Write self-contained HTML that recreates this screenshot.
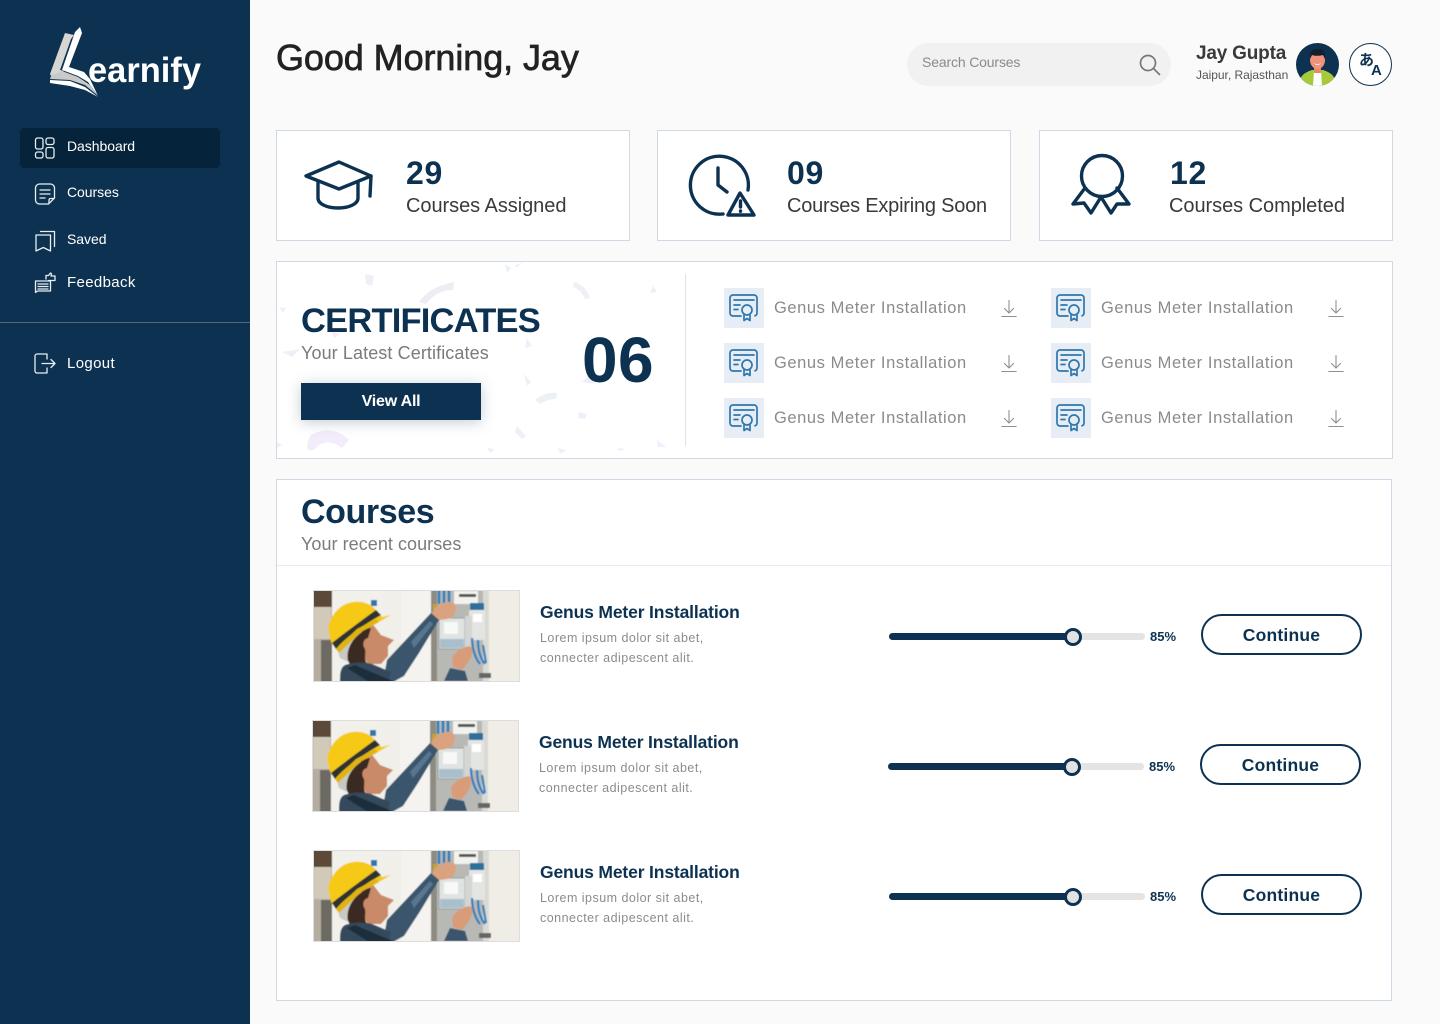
<!DOCTYPE html>
<html lang="en"><head><meta charset="utf-8"><title>Learnify</title>
<style>
*{box-sizing:border-box}
html,body{margin:0;padding:0;width:1440px;height:1024px;overflow:hidden;background:#fafafa;font-family:"Liberation Sans",sans-serif}
.a{position:absolute}
.t{position:absolute;white-space:nowrap;line-height:1}
.card{position:absolute;background:#fff;border:1px solid #cfd9e3}
svg{position:absolute;overflow:visible}
.n{color:#fff;font-size:14px;left:67px;letter-spacing:-.05px}
.ic{fill:none;stroke:#e8edf1;stroke-width:1.3;stroke-linecap:round;stroke-linejoin:round}
.navy{fill:none;stroke:#0d3251;stroke-width:3.4;stroke-linecap:round;stroke-linejoin:round}
.num{font-size:32px;font-weight:700;color:#0d3251;letter-spacing:.7px}
.lab{font-size:20px;color:#3a3a3a;letter-spacing:-.05px}
.gm{font-size:16.5px;color:#8b8b8b;letter-spacing:.58px}
.tile{position:absolute;width:40px;height:40px;background:#e6edf4}
.ct{font-size:17.5px;font-weight:700;color:#0d3251;letter-spacing:-.15px}
.cd{font-size:12.5px;color:#8c8c8c;letter-spacing:.48px}
.pc{font-size:13px;font-weight:700;color:#0d3251;letter-spacing:.05px}
.btn{position:absolute;width:161px;height:41px;border:2px solid #0d3251;border-radius:21px;color:#0d3251;font-size:17.5px;font-weight:700;text-align:center;line-height:38px;letter-spacing:.2px;background:#fff}
.track{position:absolute;width:256px;height:7px;border-radius:4px;background:#e4e4e4}
.fill{position:absolute;width:184px;height:7px;border-radius:4px;background:#0d3251}
.thumb{position:absolute;width:18px;height:18px;border-radius:50%;border:3.5px solid #0d3251;background:#e2e2e2}
</style></head><body>
<svg width="0" height="0" style="position:absolute"><defs>
<filter id="soft" x="0" y="0" width="1" height="1"><feGaussianBlur stdDeviation=".55"/></filter>
<symbol id="cert" viewBox="0 0 40 40">
<g fill="none" stroke="#2f77ad" stroke-width="1.7" stroke-linecap="round" stroke-linejoin="round">
<path d="M17 28H9a3 3 0 0 1-3-3V10a3 3 0 0 1 3-3h21a3 3 0 0 1 3 3v15a3 3 0 0 1-2 2.800"/>
<path d="M10 12h20M10 17h6M10 21.500h4"/>
<circle cx="23" cy="22" r="5"/>
<path d="M20 27v5.500l3-2 3 2V27"/>
</g></symbol>
<symbol id="dl" viewBox="0 0 16 20">
<g fill="none" stroke="#8f8f8f" stroke-width="1.1" stroke-linecap="round" stroke-linejoin="round">
<path d="M8 1.500v12M3.500 9.500 8 14l4.500-4.500M.8 17.500h14.400"/></g></symbol>
<symbol id="photo" viewBox="0 0 207 92" preserveAspectRatio="none">
<g filter="url(#soft)">
<rect width="207" height="92" fill="#f0efe9"/>
<rect x="0" width="19" height="92" fill="#b5ae9f"/>
<rect x="0" y="0" width="19" height="17" fill="#5c4a38"/>
<rect x="1" y="17" width="17" height="32" fill="#d2cab9"/>
<rect x="8" y="50" width="14" height="42" fill="#6d6a63"/>
<rect x="19" width="52" height="92" fill="#f1f0eb"/>
<rect x="88" width="30" height="92" fill="#f4f3ef"/>
<rect x="118" width="8" height="92" fill="#8e8c82"/>
<rect x="124" y="0" width="52" height="92" fill="#b8b9b5"/>
<rect x="176" width="31" height="92" fill="#efede6"/>
<rect x="170" width="6" height="92" fill="#dadad4"/>
<path d="M126 0v14M131 0v14M136 0v16" stroke="#2f7fc0" stroke-width="2.600" fill="none"/>
<rect x="141" y="1" width="24" height="13" fill="#f2f2ee"/><rect x="146" y="4" width="17" height="3" fill="#555"/>
<rect x="120" y="14" width="5" height="8" fill="#c9a227"/>
<rect x="156" y="20" width="16" height="30" fill="#e3e5e2"/><rect x="160" y="24" width="9" height="8" fill="#fff"/>
<path d="M157 13h14v7h-14z" fill="#2f6f9c"/>
<rect x="126" y="28" width="26" height="31" fill="#dfe3e1" stroke="#8d9493" stroke-width=".8"/>
<rect x="131" y="32" width="14" height="12" fill="#f8f8f6"/>
<path d="M127 49h24v9h-24z" fill="#a9c0cc"/>
<path d="M152 26h7v36h-7z" fill="#d4d6d3"/>
<path d="M159 48c0 10 3 20 8 26M165 50c0 10 2 18 7 24M170 55l3 18" stroke="#2f7fc0" stroke-width="2.200" fill="none"/>
<rect x="166" y="83" width="12" height="5" fill="#666"/>
<path d="M119 24c1-7 12-13 19-12 7 1 6 11 1 15-5 3-13 3-18 3Z" fill="#dba27f"/>
<path d="M74 70 118 23 126 30 106 63 91 86 80 92H70Z" fill="#3a566c"/>
<path d="M98 52 117 31 120 34 101 58Z" fill="#587690"/>
<path d="M139 68c3-6 9-10 14-11 5-2 7 0 6 5 0 7-6 13-10 18l-9-3Z" fill="#d99c78"/>
<path d="M131 91l6-13 15 3 3 10Z" fill="#3a566c"/>
<path d="M58 32 68 45 81 50 75 56 75 66 68 74 55 74 46 60Z" fill="#c98a69"/>
<path d="M38 46c10-6 16-8 20-8l-3 10c-5 1-6 7-3 11 1 5-1 9 1 13l3 3-18 1c-6-8-7-21 0-30Z" fill="#3b2b22"/>
<path d="M32 75c8-3 20-3 27-1l19 8-2 10H27c0-8 0-14 5-17Z" fill="#34495d"/>
<path d="M42 75l40 17H56L34 78Z" fill="#1f2e3b"/>
<path d="M32 42c-4 6-9 16-5 26l8 4c-2-10 2-22 14-30Z" fill="#c8c9c4"/>
<path d="M15 38C18 24 28 13 41 12c9-1 17 2 22 8l6 7 9-2-12 7-18 10-22 21-8-11Z" fill="#f5c916"/>
<path d="M19 53c10-8 26-20 44-33l5 5C50 35 32 48 23 59Z" fill="#2f3133"/>
<path d="M26 63 48 42 66 32 63 29 44 39 23 59Z" fill="#e0b40e"/>
<rect x="58" y="10" width="6" height="6" fill="#2f77ad"/>
</g>
</symbol>
</defs></svg>

<!-- Sidebar -->
<div class="a" style="left:0;top:0;width:250px;height:1024px;background:#0d3251"></div>
<svg style="left:0;top:0" width="250" height="110">
<path d="M65 33 74 35 71 39 60 70 64 71 51 76 50 74Z" fill="#d6d6d3"/>
<path d="M51 76 62 71 78 77 90 85 97 95 85 85 70 80 50 79Z" fill="#c9c9c6"/>
<path d="M80 27 82 33 69 67 84 72 90 79 98 96 88 82 78 76 62 70 75 32Z" fill="#fff"/>
<path d="M50 80 70 81 85 87 98 97 85 90 70 86 50 83Z" fill="#fff"/>
<text x="88" y="82" font-family="Liberation Sans" font-size="35" font-weight="700" fill="#fff" textLength="113" lengthAdjust="spacingAndGlyphs">earnify</text>
</svg>
<div class="a" style="left:20px;top:128px;width:200px;height:40px;border-radius:4px;background:#05233a"></div>
<svg style="left:34px;top:137px" width="22" height="22" class="ic" viewBox="0 0 22 22"><rect x="1.500" y="1" width="7.500" height="11" rx="2"/><rect x="12" y="1" width="8" height="6.500" rx="2"/><rect x="1.500" y="15" width="7.500" height="6" rx="2"/><rect x="12" y="10.500" width="8" height="10.500" rx="2"/></svg>
<div class="t n" style="top:139px">Dashboard</div>
<svg style="left:34px;top:183px" width="22" height="22" class="ic" viewBox="0 0 22 22"><path d="M13 21H5.500A4 4 0 0 1 1.500 17V5A4 4 0 0 1 5.500 1h11a4 4 0 0 1 4 4v10l-6 6Z"/><path d="M6 7h10M6 11h10M6 15h5M15 20v-3a1.500 1.500 0 0 1 1.500-1.500H20"/></svg>
<div class="t n" style="top:185px">Courses</div>
<svg style="left:34px;top:229px" width="22" height="24" class="ic" viewBox="0 0 22 24"><path d="M2 6h14.500v16l-7.200-3.500L2 22Z"/><path d="M6.500 2.500H20.500V17.500"/></svg>
<div class="t n" style="top:232px">Saved</div>
<svg style="left:34px;top:272px" width="22" height="22" class="ic" viewBox="0 0 22 22"><path d="M1.500 20.500V9h15v10H3.500Z"/><path d="M4 12h10M4 14.500h10M4 17h10"/><path d="M12 7V3.500h2.500L16.500 1l1 1-.5 2H21v4.500h-6.500" fill="#0d3251"/></svg>
<div class="t n" style="top:275px;font-size:15px;letter-spacing:.35px">Feedback</div>
<div class="a" style="left:0;top:322px;width:250px;height:1px;background:#52697c"></div>
<svg style="left:34px;top:353px" width="22" height="21" class="ic" viewBox="0 0 22 21"><path d="M13 1H3A2 2 0 0 0 1 3v15a2 2 0 0 0 2 2h10v-5M13 6V1"/><path d="M8 10.500h13M17 6.500l4 4-4 4"/></svg>
<div class="t n" style="top:356px;font-size:15px;letter-spacing:.35px">Logout</div>

<!-- Header -->
<div class="t" style="left:276px;top:38px;font-size:36px;line-height:40px;color:#222;font-weight:400;-webkit-text-stroke:.7px #222;letter-spacing:-.08px">Good Morning, Jay</div>
<div class="a" style="left:907px;top:43px;width:264px;height:43px;border-radius:22px;background:#f1f1f2"></div>
<div class="t" style="left:922px;top:55px;font-size:14px;color:#8a8a8a;letter-spacing:-.15px">Search Courses</div>
<svg style="left:1139px;top:54px" width="22" height="22" viewBox="0 0 22 22" fill="none" stroke="#777" stroke-width="1.700" stroke-linecap="round"><circle cx="9" cy="9" r="7.500"/><path d="M14.500 14.500 20.500 20.500"/></svg>
<div class="t" style="left:1196px;top:44px;font-size:19px;font-weight:700;color:#3a3a3a;letter-spacing:-.2px">Jay Gupta</div>
<div class="t" style="left:1196px;top:69px;font-size:12px;color:#555;letter-spacing:-.03px">Jaipur, Rajasthan</div>
<svg style="left:1296px;top:43px" width="43" height="43" viewBox="0 0 43 43">
<defs><clipPath id="av"><circle cx="21.500" cy="21.500" r="21.500"/></clipPath></defs>
<g clip-path="url(#av)"><rect width="43" height="43" fill="#0d3251"/>
<path d="M3 43c0-9 4-13 13-16h11c9 3 13 7 13 16Z" fill="#a8c93a"/>
<path d="M18 28h7l1 15h-9Z" fill="#fff"/>
<rect x="18" y="22" width="7" height="8" fill="#e8876a"/>
<ellipse cx="21.500" cy="17" rx="7.500" ry="9" fill="#f0917a"/>
<path d="M14 16c-1-7 2-10 7-10 6-1 9 3 8 10l-2-4c-4 1-8 1-11 0Z" fill="#10202e"/>
<path d="M18 20c2 1.500 5 1.500 7 0-1 2.500-6 2.500-7 0Z" fill="#fff"/>
</g></svg>
<div class="a" style="left:1349px;top:43px;width:43px;height:43px;border-radius:50%;border:1px solid #0d3251;background:#fff"></div>
<div class="t" style="left:1359px;top:52px;font-size:15px;font-weight:700;color:#0d3251;font-family:'Noto Sans CJK JP',sans-serif">あ</div>
<div class="t" style="left:1371px;top:63px;font-size:15px;font-weight:700;color:#0d3251">A</div>

<!-- Stat cards -->
<div class="card" style="left:276px;top:130px;width:354px;height:111px"></div>
<svg style="left:304px;top:160px" width="70" height="52" viewBox="0 0 70 52" class="navy"><path d="M35 2 2 16 35 29 67 16Z"/><path d="M67 16 66 36"/><path d="M14 23V38c0 6 9 10 20 10s20-4 20-10V23"/></svg>
<div class="t num" style="left:406px;top:157px">29</div>
<div class="t lab" style="left:406px;top:196px">Courses Assigned</div>

<div class="card" style="left:657px;top:130px;width:354px;height:111px"></div>
<svg style="left:688px;top:154px" width="70" height="64" viewBox="0 0 70 64" class="navy"><path d="M35 60A29 29 0 1 1 60 36"/><path d="M30 14V31L39 38"/><path d="M52 39 40 61H66Z"/><path d="M52.500 47v6M52.500 57v.3"/></svg>
<div class="t num" style="left:787px;top:157px">09</div>
<div class="t lab" style="left:787px;top:196px;letter-spacing:-.22px">Courses Expiring Soon</div>

<div class="card" style="left:1039px;top:130px;width:354px;height:111px"></div>
<svg style="left:1071px;top:154px" width="62" height="62" viewBox="0 0 62 62" class="navy"><circle cx="31" cy="22" r="20.500"/><path d="M14 34 2 50 13 49 20 59 30 43 40 59 46 50 58 50 46 34"/></svg>
<div class="t num" style="left:1170px;top:157px">12</div>
<div class="t lab" style="left:1169px;top:196px">Courses Completed</div>

<!-- Certificates -->
<div class="card" style="left:276px;top:261px;width:1117px;height:198px"></div>
<svg style="left:277px;top:262px" width="408" height="196" viewBox="0 0 408 196" opacity=".75">
<g fill="#e7ecf3"><path d="M88 12 97 14 95 24 89 22Z"/><path d="M228 2 234 6 230 11Z"/><path d="M142 40C152 26 167 22 177 20L176 28C165 28 157 32 149 42Z" fill="#e6e8f2"/><path d="M297 20C305 22 311 28 313 36L308 37C305 30 302 27 296 25Z"/><path d="M247 112 254 120 250 124Z"/><path d="M258 138C266 131 275 130 280 131L279 137C272 137 268 139 263 142Z"/><path d="M240 164 249 174 245 177 238 170Z"/><path d="M5 90 23 87 15 95Z"/><path d="M376 24 380 30 373 31Z"/><path d="M305 120 312 113 318 122Z"/><path d="M102 86 110 90 112 96Z"/><path d="M30 123 36 123 32 131Z"/><path d="M0 180 5 183 0 186Z"/><path d="M210 185 218 188 213 191Z"/><path d="M280 186 284 192 289 188Z"/></g>
<g fill="#efe6fa"><path d="M33 174C45 166 60 166 72 178L65 186C55 178 45 178 37 188 30 190 28 186 33 174Z"/><path d="M302 150 310 152 308 157 301 156Z"/><path d="M250 76 255 84 248 86Z"/><path d="M2 45 9 46 6 51Z"/><path d="M55 70 63 72 57 76Z"/><path d="M380 178 389 185 381 185Z"/><path d="M237 4 246 0 240 5Z"/><path d="M340 186 349 187 342 189Z"/></g>
</svg>
<div class="a" style="left:685px;top:274px;width:1px;height:172px;background:#dde3ea"></div>
<div class="t" style="left:301px;top:302px;font-size:34.5px;line-height:38px;font-weight:700;color:#0d3251;letter-spacing:-.8px">CERTIFICATES</div>
<div class="t" style="left:301px;top:344px;font-size:18px;color:#7b7b7b;letter-spacing:.1px">Your Latest Certificates</div>
<div class="a" style="left:301px;top:383px;width:180px;height:37px;background:#0d3251;box-shadow:0 2px 14px rgba(13,50,81,.25);color:#fff;font-size:16px;font-weight:700;text-align:center;line-height:38px;letter-spacing:-.2px">View All</div>
<div class="t" style="left:582px;top:328px;font-size:64px;line-height:64px;font-weight:700;color:#0d3251;letter-spacing:.4px">06</div>

<div class="tile" style="left:724px;top:288px"></div><svg style="left:724px;top:288px" width="40" height="40"><use href="#cert"/></svg>
<div class="t gm" style="left:774px;top:300px">Genus Meter Installation</div><svg style="left:1001px;top:299px" width="16" height="20"><use href="#dl"/></svg>
<div class="tile" style="left:724px;top:343px"></div><svg style="left:724px;top:343px" width="40" height="40"><use href="#cert"/></svg>
<div class="t gm" style="left:774px;top:355px">Genus Meter Installation</div><svg style="left:1001px;top:354px" width="16" height="20"><use href="#dl"/></svg>
<div class="tile" style="left:724px;top:398px"></div><svg style="left:724px;top:398px" width="40" height="40"><use href="#cert"/></svg>
<div class="t gm" style="left:774px;top:410px">Genus Meter Installation</div><svg style="left:1001px;top:409px" width="16" height="20"><use href="#dl"/></svg>
<div class="tile" style="left:1051px;top:288px"></div><svg style="left:1051px;top:288px" width="40" height="40"><use href="#cert"/></svg>
<div class="t gm" style="left:1101px;top:300px">Genus Meter Installation</div><svg style="left:1328px;top:299px" width="16" height="20"><use href="#dl"/></svg>
<div class="tile" style="left:1051px;top:343px"></div><svg style="left:1051px;top:343px" width="40" height="40"><use href="#cert"/></svg>
<div class="t gm" style="left:1101px;top:355px">Genus Meter Installation</div><svg style="left:1328px;top:354px" width="16" height="20"><use href="#dl"/></svg>
<div class="tile" style="left:1051px;top:398px"></div><svg style="left:1051px;top:398px" width="40" height="40"><use href="#cert"/></svg>
<div class="t gm" style="left:1101px;top:410px">Genus Meter Installation</div><svg style="left:1328px;top:409px" width="16" height="20"><use href="#dl"/></svg>

<!-- Courses -->
<div class="card" style="left:276px;top:479px;width:1116px;height:522px"></div>
<div class="a" style="left:277px;top:565px;width:1114px;height:1px;background:#e6e9ed"></div>
<div class="t" style="left:301px;top:493px;font-size:34px;line-height:38px;font-weight:700;color:#0d3251;letter-spacing:-.4px">Courses</div>
<div class="t" style="left:301px;top:535px;font-size:18px;color:#7b7b7b;letter-spacing:.05px">Your recent courses</div>

<svg style="left:313px;top:590px" width="207" height="92"><use href="#photo" width="207" height="92"/></svg><div class="a" style="left:313px;top:590px;width:207px;height:92px;border:1px solid #ddd"></div>
<div class="t ct" style="left:540px;top:604px">Genus Meter Installation</div>
<div class="t cd" style="left:540px;top:632px">Lorem ipsum dolor sit abet,</div>
<div class="t cd" style="left:540px;top:652px">connecter adipescent alit.</div>
<div class="track" style="left:889px;top:633px"></div><div class="fill" style="left:889px;top:633px"></div><div class="thumb" style="left:1064px;top:628px"></div>
<div class="t pc" style="left:1150px;top:630px">85%</div>
<div class="btn" style="left:1201px;top:614px">Continue</div>

<svg style="left:312px;top:720px" width="207" height="92"><use href="#photo" width="207" height="92"/></svg><div class="a" style="left:312px;top:720px;width:207px;height:92px;border:1px solid #ddd"></div>
<div class="t ct" style="left:539px;top:734px">Genus Meter Installation</div>
<div class="t cd" style="left:539px;top:762px">Lorem ipsum dolor sit abet,</div>
<div class="t cd" style="left:539px;top:782px">connecter adipescent alit.</div>
<div class="track" style="left:888px;top:763px"></div><div class="fill" style="left:888px;top:763px"></div><div class="thumb" style="left:1063px;top:758px"></div>
<div class="t pc" style="left:1149px;top:760px">85%</div>
<div class="btn" style="left:1200px;top:744px">Continue</div>

<svg style="left:313px;top:850px" width="207" height="92"><use href="#photo" width="207" height="92"/></svg><div class="a" style="left:313px;top:850px;width:207px;height:92px;border:1px solid #ddd"></div>
<div class="t ct" style="left:540px;top:864px">Genus Meter Installation</div>
<div class="t cd" style="left:540px;top:892px">Lorem ipsum dolor sit abet,</div>
<div class="t cd" style="left:540px;top:912px">connecter adipescent alit.</div>
<div class="track" style="left:889px;top:893px"></div><div class="fill" style="left:889px;top:893px"></div><div class="thumb" style="left:1064px;top:888px"></div>
<div class="t pc" style="left:1150px;top:890px">85%</div>
<div class="btn" style="left:1201px;top:874px">Continue</div>
</body></html>
